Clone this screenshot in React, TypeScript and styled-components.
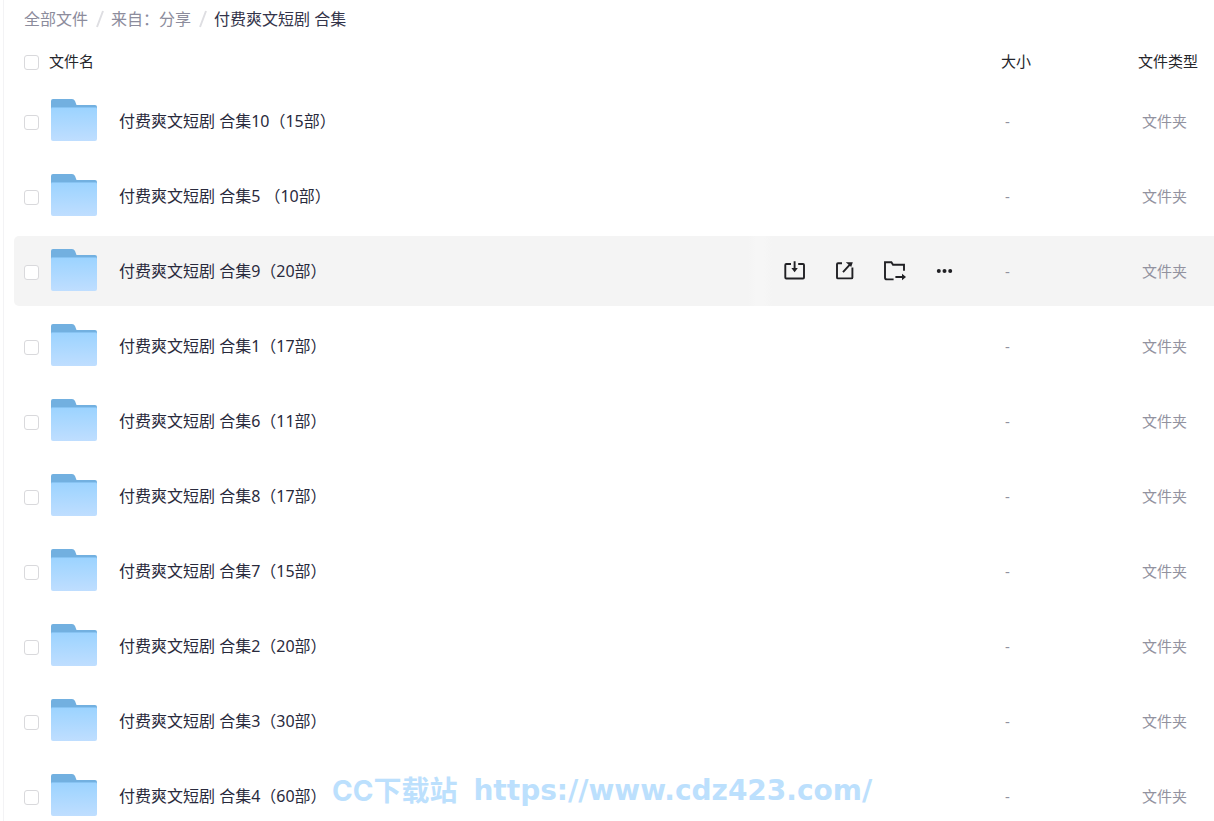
import React from "react";
import styled, { createGlobalStyle } from "styled-components";

const GlobalStyle = createGlobalStyle`
  * { box-sizing: border-box; }
  body {
    margin: 0;
    background: #fff;
    color: #25262b;
    font-family: "Noto Sans", "Noto Sans CJK SC", sans-serif;
    font-size: 16px;
  }
`;

const Shell = styled.main`
  position: relative;
  height: 100vh;
  overflow: hidden;
  margin-left: 3px;
  padding-left: 10px;
  border-left: 1px solid #f3f3f5;
`;

const Breadcrumb = styled.nav`
  display: flex;
  align-items: center;
  height: 38px;
  padding-left: 10px;
  line-height: 24px;
`;

const Crumb = styled.a<{ $current?: boolean }>`
  color: ${(p) => (p.$current ? "#33344a" : "#8c8c9c")};
  text-decoration: none;
  white-space: pre;
`;

const Slash = styled.svg`
  width: 10px;
  height: 18px;
  margin: 0 6px 0 7px;
  stroke: #dedee2;
  stroke-width: 2;
`;

const Table = styled.table`
  width: 100%;
  table-layout: fixed;
  border-collapse: separate;
  border-spacing: 0 5px;
`;

const Col = styled.col<{ $width?: number }>`
  width: ${(p) => (p.$width ? `${p.$width}px` : "auto")};
`;

const HeadCell = styled.th`
  height: 38px;
  padding: 0 0 2px;
  font-size: 15px;
  font-weight: 400;
  line-height: 22px;
  text-align: left;
  white-space: nowrap;
`;

const Row = styled.tr<{ $active?: boolean }>`
  background: ${(p) => (p.$active ? "#f4f4f4" : "transparent")};
`;

const Cell = styled.td`
  height: 70px;
  padding: 0;
  &:first-child { border-radius: 5px 0 0 5px; }
`;

const MetaCell = styled(Cell)`
  padding-left: 4px;
  color: #92929f;
  font-size: 15px;
  line-height: 22px;
  white-space: nowrap;
`;

const Check = styled.input`
  appearance: none;
  display: block;
  width: 15px;
  height: 15px;
  margin: 2px 0 0 10px;
  border: 1px solid #d9d9dc;
  border-radius: 3px;
  background: #fff;
`;

const NameLine = styled.div`
  display: flex;
  align-items: center;
  height: 70px;
  padding-left: 2px;
`;

const FolderSvg = styled.svg`
  flex: none;
  width: 46px;
  height: 42px;
  margin: 0 22px 2px 0;
`;

const FileName = styled.a`
  flex: 1;
  color: #292a3c;
  line-height: 24px;
  text-decoration: none;
  white-space: pre;
`;

const Actions = styled.div`
  display: flex;
  align-items: center;
  gap: 26px;
  height: 70px;
  padding: 0 45px 0 34px;
  background: linear-gradient(90deg, #f4f4f4, #f6f6f6 8px, #f6f6f6 16px, #f4f4f4 24px);
`;

const IconButton = styled.button`
  width: 24px;
  height: 24px;
  padding: 0;
  border: 0;
  background: none;
  color: #202024;
  svg { display: block; }
`;

const Watermark = styled.div`
  position: absolute;
  left: 328px;
  top: 771px;
  display: flex;
  align-items: center;
  height: 40px;
  gap: 16px;
  color: #bce0fd;
  font-size: 28px;
  font-weight: 700;
  line-height: 40px;
  white-space: nowrap;
  pointer-events: none;
`;

const SiteName = styled.span`
  font-family: Inter, "Noto Sans CJK SC", sans-serif;
`;

const SiteUrl = styled.span`
  font-family: "DejaVu Sans", sans-serif;
`;

const FolderIcon = () => (
  <FolderSvg viewBox="0 0 46 42" aria-hidden="true">
    <defs>
      <linearGradient id="folder-front" x1="0" y1="0" x2="0" y2="1">
        <stop offset="0" stopColor="#9bd3ff" />
        <stop offset="1" stopColor="#bfdeff" />
      </linearGradient>
    </defs>
    <path d="M0 2Q0 0 2 0H21Q23 0 24 2L25.5 6H44Q46 6 46 8V20H0Z" fill="#72b0e0" />
    <path d="M0 10Q0 8 2 8H44Q46 8 46 10V40Q46 42 44 42H2Q0 42 0 40Z" fill="url(#folder-front)" />
    <path d="M1 8.5H45" stroke="#87c3f2" />
  </FolderSvg>
);

const icons = [
  {
    label: "下载",
    art: (
      <>
        <path d="M9 5H4.3Q3.3 5 3.3 6V18.5Q3.3 19.5 4.3 19.5H21Q22 19.5 22 18.5V6Q22 5 21 5H16.2M12.6 2.2V11" />
        <path d="M9.4 9H15.8L12.6 13.2Z" fill="currentColor" stroke="none" />
      </>
    ),
  },
  {
    label: "分享",
    art: (
      <>
        <path d="M10 4.2H6Q5 4.2 5 5.2V18.4Q5 19.4 6 19.4H19.4Q20.4 19.4 20.4 18.4V8.5M11 13.2L18.3 5.2" />
        <path d="M13.8 3.2H20.8L19.2 8Z" fill="currentColor" stroke="none" />
      </>
    ),
  },
  {
    label: "移动",
    art: (
      <>
        <path d="M11.6 20.4H5Q3 20.4 3 18.4V3.3H9.4L11 5.8H22V11.8M13.4 18H21" />
        <path d="M20 14.8L24 18L20 21.2Z" fill="currentColor" stroke="none" />
      </>
    ),
  },
  {
    label: "更多",
    art: (
      <g fill="currentColor" stroke="none">
        <circle cx="6.8" cy="12" r="2" />
        <circle cx="12.5" cy="12" r="2" />
        <circle cx="18.2" cy="12" r="2" />
      </g>
    ),
  },
];

const files = [
  "付费爽文短剧 合集10（15部）",
  "付费爽文短剧 合集5 （10部）",
  "付费爽文短剧 合集9（20部）",
  "付费爽文短剧 合集1（17部）",
  "付费爽文短剧 合集6（11部）",
  "付费爽文短剧 合集8（17部）",
  "付费爽文短剧 合集7（15部）",
  "付费爽文短剧 合集2（20部）",
  "付费爽文短剧 合集3（30部）",
  "付费爽文短剧 合集4（60部）",
];

const activeIndex = 2;

const Separator = () => (
  <Slash viewBox="0 0 10 18" aria-hidden="true">
    <path d="M8 1L2 17" />
  </Slash>
);

export default function App() {
  return (
    <Shell>
      <GlobalStyle />
      <Breadcrumb aria-label="路径">
        <Crumb href="#all">全部文件</Crumb>
        <Separator />
        <Crumb href="#share">来自：分享</Crumb>
        <Separator />
        <Crumb href="#current" $current aria-current="page">付费爽文短剧 合集</Crumb>
      </Breadcrumb>
      <Table>
        <colgroup>
          <Col $width={35} />
          <Col />
          <Col $width={137} />
          <Col $width={76} />
        </colgroup>
        <thead>
          <tr>
            <HeadCell><Check type="checkbox" aria-label="全选" /></HeadCell>
            <HeadCell>文件名</HeadCell>
            <HeadCell>大小</HeadCell>
            <HeadCell>文件类型</HeadCell>
          </tr>
        </thead>
        <tbody>
          {files.map((name, i) => (
            <Row key={name} $active={i === activeIndex}>
              <Cell><Check type="checkbox" aria-label={name} /></Cell>
              <Cell>
                <NameLine>
                  <FolderIcon />
                  <FileName href={`#folder-${i}`}>{name}</FileName>
                  {i === activeIndex && (
                    <Actions>
                      {icons.map((icon) => (
                        <IconButton key={icon.label} type="button" aria-label={icon.label}>
                          <svg width="24" height="24" viewBox="0 0 24 24" fill="none" stroke="currentColor" strokeWidth="1.9">
                            {icon.art}
                          </svg>
                        </IconButton>
                      ))}
                    </Actions>
                  )}
                </NameLine>
              </Cell>
              <MetaCell>-</MetaCell>
              <MetaCell>文件夹</MetaCell>
            </Row>
          ))}
        </tbody>
      </Table>
      <Watermark>
        <SiteName>CC下载站</SiteName>
        <SiteUrl>https://www.cdz423.com/</SiteUrl>
      </Watermark>
    </Shell>
  );
}
